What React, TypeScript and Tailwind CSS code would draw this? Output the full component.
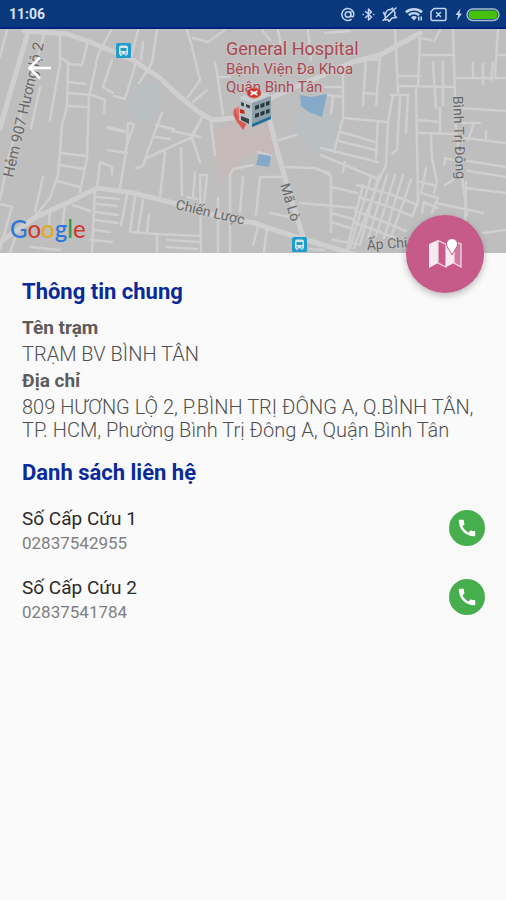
import React from "react";
import { MdCall } from "react-icons/md";

const mainRoads: string[] = [
  "M0 128 L28 32",
  "M24 31 L67 34 L90 42 L133 60 L160 78 L180 97 L200 113 L213 120 L233 118",
  "M240 112 L273 97 L330 72 L353 62 L380 55 L420 33",
  "M0 242 L36 217 L67 203 L97 188 L133 193 L173 203 L213 215 L253 223 L300 238 L380 262",
  "M266 105 L277 150 L290 195 L304 240",
];

const streets: string[] = [
  "M7 30 L0 57", "M45 31 L31 80 L8 160 L0 200", "M40 87 L31 128",
  "M60 36 L60 63 L50 120", "M61 58 L70 64 L82 65 L88 41",
  "M68 64 L67 107", "M68 82 L86 84", "M68 93 L92 95 L105 100 L104 113", "M68 106 L88 107",
  "M111 30 L98 55 L89 97 L87 158 L80 192", "M112 60 L103 87 L113 93", "M114 96 L125 99 L136 62",
  "M138 30 L131 58", "M143 42 L141 60", "M157 30 L152 63 L139 83",
  "M187 30 L192 47 L200 80 L188 97", "M193 38 L208 42 L225 30", "M215 62 L217 72 L223 115", "M217 77 L230 77",
  "M207 90 L193 102", "M202 118 L192 138 L200 162", "M162 113 L148 150 L143 166 L136 168", "M156 125 L174 129",
  "M108 127 L124 131", "M127 145 L128 123 L134 124 L127 145 L120 188", "M211 120 L212 133 L215 155",
  "M67 107 L62 125 L58 175 L50 198 L36 215", "M60 153 L87 156", "M60 165 L84 169", "M57 181 L80 187",
  "M43 177 L35 212", "M97 188 L100 162 L112 167 L112 174", "M108 150 L127 153", "M107 128 L125 132",
  "M95 188 L92 253", "M97 197 L119 199", "M97 204 L117 206", "M96 212 L118 215", "M95 220 L118 223", "M95 230 L110 232", "M90 240 L112 242",
  "M127 195 L121 225", "M135 196 L130 232 L157 234 L200 236", "M143 200 L138 231", "M149 215 L147 232", "M157 234 L157 253",
  "M167 240 L200 242", "M167 247 L197 249", "M200 175 L201 253", "M200 175 L207 175 L203 215", "M195 173 L193 198", "M187 197 L197 199",
  "M218 198 L218 253", "M230 253 L230 175 L233 169 L253 165", "M243 177 L240 212", "M165 152 L160 198", "M181 148 L182 195",
  "M147 158 L190 138 L202 118", "M155 137 L170 139", "M0 204 L12 207 L0 249", "M15 238 L10 253", "M30 247 L60 250", "M50 211 L49 224", "M65 204 L62 230", "M73 205 L90 211", "M172 131 L200 137",
  "M262 30 L270 40", "M278 30 L282 52", "M308 30 L311 60", "M325 33 L350 31",
  "M453 29 L456 130 L467 215", "M395 28 L398 92", "M398 76 L420 76", "M398 86 L455 87", "M420 38 L418 86", "M420 55 L453 55", "M419 38 L431 40", "M440 30 L434 41",
  "M433 62 L436 108", "M443 62 L443 105", "M456 78 L506 78", "M473 63 L473 78", "M483 64 L483 84", "M493 62 L491 80", "M498 29 L495 76", "M506 55 L498 55",
  "M458 108 L506 111", "M463 123 L480 123", "M474 123 L468 140", "M366 58 L363 105", "M380 58 L376 105", "M366 59 L380 60", "M363 93 L376 94",
  "M343 68 L343 118 L334 152", "M325 87 L343 87", "M328 95 L343 97", "M333 97 L331 113",
  "M345 118 L388 122", "M393 95 L388 122 L386 165 L378 182 L354 248", "M391 95 L408 95 L406 133", "M400 98 L398 133",
  "M416 87 L418 200 L413 215", "M418 120 L440 122", "M418 133 L456 134", "M440 108 L440 132", "M431 134 L432 158 L437 182 L434 193",
  "M378 122 L376 158", "M341 132 L375 142", "M339 141 L375 150", "M321 148 L378 162", "M321 155 L378 179", "M345 162 L343 172",
  "M398 133 L397 150 L392 154", "M279 140 L296 135", "M258 152 L271 156", "M283 167 L316 168 L331 176 L331 232",
  "M260 177 L283 177", "M260 177 L256 215", "M253 221 L296 238", "M259 224 L253 245", "M267 228 L264 253", "M270 213 L290 217", "M300 203 L357 208", "M316 169 L330 173", "M331 187 L357 193", "M331 213 L353 219", "M331 222 L353 229", "M333 240 L357 244", "M310 249 L324 250",
  "M363 185 L346 253", "M371 177 L350 248", "M379 175 L360 245", "M387 175 L368 239", "M395 175 L376 236", "M403 175 L384 238", "M411 180 L390 240",
  "M357 185 L390 194 L418 205", "M359 197 L390 207 L412 216", "M355 211 L380 220 L406 231", "M354 222 L398 239",
  "M420 182 L434 185", "M426 168 L421 193 L438 198 L432 213", "M422 213 L424 202 L437 208", "M436 203 L483 213", "M466 182 L465 222",
  "M466 188 L506 193", "M468 161 L506 167", "M468 171 L506 177", "M465 138 L506 143", "M486 131 L486 141", "M445 158 L453 160", "M453 180 L445 185", "M445 158 L444 165", "M483 233 L506 230",
];

function StatusIcons() {
  return (
    <div className="flex items-center text-[#c3d4ee]" aria-hidden="true">
      <svg className="h-4 w-40" viewBox="340 6 160 16" fill="none" stroke="currentColor" strokeWidth="1.5" strokeLinecap="round" strokeLinejoin="round">
        <circle cx="348" cy="14.500" r="2.800" />
        <path d="M350.800 11.800v3.500c0 2 3 2 3-.8a6 6 0 1 0-2.700 5" />
        <path d="M365.500 11.500l6 5.500-3 3V9l3 3-6 5.500" />
        <path d="M363.200 14.500h.2M373.600 14.500h.2" />
        <path d="M383.500 12.500l2 1.500c.5-3.500 3-5 5.500-4.500l1.500-1.500.8 2.500c1.500 1 2 3 1.200 5l2 2-4.500.5-3 3.500-1-2-3 .5.500-3z" />
        <path d="M383 20.500L396 8" />
        <g stroke="none" fill="currentColor">
          <path d="M405 11.200a14 14 0 0 1 18 0l-1.800 2a11 11 0 0 0-14.400 0zM408 14.200a9 9 0 0 1 12 0l-1.700 1.800a7 7 0 0 0-8.600 0zM411 17.200a5 5 0 0 1 6 0l-3 3.300z" />
          <path d="M418 16.500h1.500v4H418zM420.500 16.500h1.500v4h-1.500z" />
        </g>
        <path d="M434 8.500h10.500a1.500 1.500 0 0 1 1.500 1.500v9a1.500 1.500 0 0 1-1.500 1.500h-12A1.500 1.500 0 0 1 431 19v-7.500zM436.500 12.500l4 4M440.500 12.500l-4 4" />
        <path d="M460.500 8.500l-5 6.500h2.700l-1.200 5.500 5-7h-2.700z" fill="currentColor" stroke="none" />
        <rect x="467" y="9" width="32" height="11.500" rx="5.700" stroke="#a9bccb" />
        <rect x="468.500" y="10.500" width="29" height="8.500" rx="4" fill="#45c10b" stroke="none" />
      </svg>
    </div>
  );
}

function BusStop({ x, y }: { x: number; y: number }) {
  return (
    <g transform={`translate(${x} ${y})`}>
      <rect width="15" height="15" rx="1.500" fill="#229ccb" />
      <path d="M3 4.500Q3 2.500 5 2.500h5q2 0 2 2v7h-1.500v1.500H9.500v-1.500h-4V13H4v-1.500H3z" fill="#d5e5ea" />
      <path d="M4.500 5h6v3h-6zM4.500 9.500h1.500v1H4.500zM9 9.500h1.500v1H9z" fill="#229ccb" />
    </g>
  );
}

function HospitalMarker() {
  return (
    <g>
      <path d="M235 108c-4 6 0 12 8.500 22 2-6 6-8 5-14z" fill="#dc5856" />
      <path d="M236 109c2-3 5-4 8-4l1 13c-6 1-9-4-9-9z" fill="#e77570" />
      <path d="M239 98l13 5v24l-13-7z" fill="#b9c3c6" />
      <path d="M252 103l19-7v23l-19 8z" fill="#8ea0a8" />
      <path d="M239 98l16-8 16 5-19 8z" fill="#c7cfd1" />
      <path d="M252 124l19-8v3l-19 8z" fill="#226e9b" />
      <path d="M255 106l4-1.500v4l-4 1.500zM260.500 104l4-1.500v4l-4 1.500zM266 102l3.500-1.300v4L266 106zM255 114l4-1.500v4l-4 1.500zM260.500 112l4-1.500v4l-4 1.500zM266 110l3.500-1.300v4L266 114z" fill="#27383f" />
      <path d="M241 102l3 1v3.500l-3-1zM246 104l4 1.500v3l-4-1.500zM241 116l8 3v5l-8-4z" fill="#34454c" />
      <path d="M240 109l4 1 1 4-5-1z" fill="#c52b27" />
      <ellipse cx="254" cy="93" rx="7" ry="5" fill="#cd3128" stroke="#e06960" />
      <path d="M250.500 91l7 4M257.500 91l-7 4" stroke="#fff" strokeWidth="2" />
    </g>
  );
}

function StationMap() {
  return (
    <svg className="block h-full w-full" viewBox="0 29 506 224" preserveAspectRatio="xMidYMid slice" role="img" aria-label="General Hospital Bệnh Viện Đa Khoa Quận Bình Tân">
      <rect x="-1000" y="29" width="2506" height="224" fill="#bebebe" />
      <path d="M133 85l22-3 10 18-18 22-18-10z" fill="#babfc1" />
      <path d="M298 103l30 6 12 10-6 30-18 6-22-20z" fill="#babfc1" />
      <path d="M216 128l40-14 16 12 3 28-28 2-29 30-2-38z" fill="#c6b9b9" />
      <g fill="none" stroke="#cfcfcf" strokeLinecap="round" strokeLinejoin="round">
        <g strokeWidth="2.500">
          {streets.map((d) => <path key={d} d={d} />)}
        </g>
        <g strokeWidth="5">
          {mainRoads.map((d) => <path key={d} d={d} />)}
        </g>
      </g>
      <path d="M300 95l11 2 16-3-5 23-13-5-8-6z" fill="#84a9c9" />
      <path d="M259 154l12 2-2 11-13-2z" fill="#84a9c9" />
      <BusStop x={116} y={43} />
      <BusStop x={292} y={237} />
      <g className="font-[Roboto,sans-serif]" fill="#a34b55" stroke="#cbc3c3" strokeWidth="2" paintOrder="stroke">
        <text x="226" y="55" fontSize="18">General Hospital</text>
        <text x="226" y="74" fontSize="15">Bệnh Viện Đa Khoa</text>
        <text x="226" y="92" fontSize="15">Quận Bình Tân</text>
      </g>
      <g className="font-[Roboto,sans-serif]" fill="#686868" stroke="#c6c6c6" strokeWidth="2" paintOrder="stroke" fontSize="14">
        <text transform="translate(13 178) rotate(-77)" fontSize="15">Hẻm 907 Hương lộ 2</text>
        <text transform="translate(175 209) rotate(13)">Chiến Lược</text>
        <text transform="translate(280 185) rotate(73)">Mã Lò</text>
        <text transform="translate(453 96) rotate(88)">Bình Trị Đông</text>
        <text transform="translate(367 250) rotate(-4)">Ấp Chi</text>
      </g>
      <HospitalMarker />
    </svg>
  );
}

function GoogleLogo() {
  return (
    <div className="absolute bottom-[9px] left-[10px] font-[Lato,sans-serif] text-[24px] leading-[30px] font-medium">
      <span className="text-[#2f76d8]">G</span>
      <span className="text-[#d23a35]">o</span>
      <span className="text-[#dfab25]">o</span>
      <span className="text-[#2f76d8]">g</span>
      <span className="text-[#2f9b50]">l</span>
      <span className="text-[#d23a35]">e</span>
    </div>
  );
}

const details = [
  { label: "Tên trạm", value: "TRẠM BV BÌNH TÂN" },
  { label: "Địa chỉ", value: "809 HƯƠNG LỘ 2, P.BÌNH TRỊ ĐÔNG A, Q.BÌNH TÂN, TP. HCM, Phường Bình Trị Đông A, Quận Bình Tân" },
];

const contacts = [
  { name: "Số Cấp Cứu 1", phone: "02837542955" },
  { name: "Số Cấp Cứu 2", phone: "02837541784" },
];

export default function App() {
  return (
    <div className="min-h-screen bg-[#fafafa] font-[Roboto,sans-serif]">
      <header className="flex h-[29px] items-center justify-between border-b-2 border-[#07207e] bg-[#09397c] pr-[6px] pl-[9px]">
        <time className="text-[14px] leading-5 font-bold text-[#d7e3f5]">11:06</time>
        <StatusIcons />
      </header>

      <section className="relative h-56">
        <StationMap />
        <button type="button" aria-label="Quay lại" className="absolute top-6 left-6 flex size-8 items-center justify-center text-white">
          <svg className="size-8" viewBox="0 0 32 32" fill="none" stroke="currentColor" strokeWidth="2.600">
            <path d="M27 15H6M16 4.500L5.500 15 16 25.500" />
          </svg>
        </button>
        <GoogleLogo />
        <button type="button" aria-label="Mở bản đồ" className="absolute right-[22px] -bottom-10 flex size-[78px] items-center justify-center rounded-full bg-[#c65a89] shadow-[0_3px_7px_rgba(0,0,0,0.25)]">
          <svg className="size-9" viewBox="0 0 36 36">
            <path d="M2 8l9-4v23l-9 5z" fill="#f7e9f0" />
            <path d="M11 4.500l8 4v22.500l-8-4z" fill="none" stroke="#f1d5e1" strokeWidth="1.300" />
            <path d="M19 9l8-4v22l-8 4z" fill="#f7e9f0" />
            <path d="M27 5.500l7 2.500v23l-7-4z" fill="#d07aa1" stroke="#f3dbe5" strokeWidth="1.300" />
            <path d="M25 19c-2-5-5.500-7-5.500-11a5.500 5.500 0 0 1 11 0c0 4-3.500 6-5.500 11z" fill="#fff" stroke="#c65a89" strokeWidth="1" />
          </svg>
        </button>
      </section>

      <main className="px-[22px] pt-6">
        <h1 className="text-[22px] leading-[30px] font-bold text-[#0a2a9c]">Thông tin chung</h1>
        <dl className="mt-[6px] text-[#505050]">
          {details.map((d) => (
            <React.Fragment key={d.label}>
              <dt className="text-[19px] leading-[30px] font-bold text-[#5c5c5c]">{d.label}</dt>
              <dd className="text-[20px] leading-[23px] font-light">{d.value}</dd>
            </React.Fragment>
          ))}
        </dl>

        <h2 className="mt-4 text-[22px] leading-[30px] font-bold text-[#0a2a9c]">Danh sách liên hệ</h2>
        <ul className="mt-[6px] -mr-px">
          {contacts.map((c) => (
            <li key={c.phone} className="flex items-start justify-between pt-3 pb-[7px]">
              <div className="leading-[25px]">
                <p className="text-[19px] text-[#2b2b2b]">{c.name}</p>
                <p className="text-[17px] text-[#808080]">{c.phone}</p>
              </div>
              <a href={`tel:${c.phone}`} aria-label={`Gọi ${c.name}`} className="mt-1 flex size-9 items-center justify-center rounded-full bg-[#47ae4d] text-white">
                <MdCall className="size-[22px]" />
              </a>
            </li>
          ))}
        </ul>
      </main>
    </div>
  );
}
